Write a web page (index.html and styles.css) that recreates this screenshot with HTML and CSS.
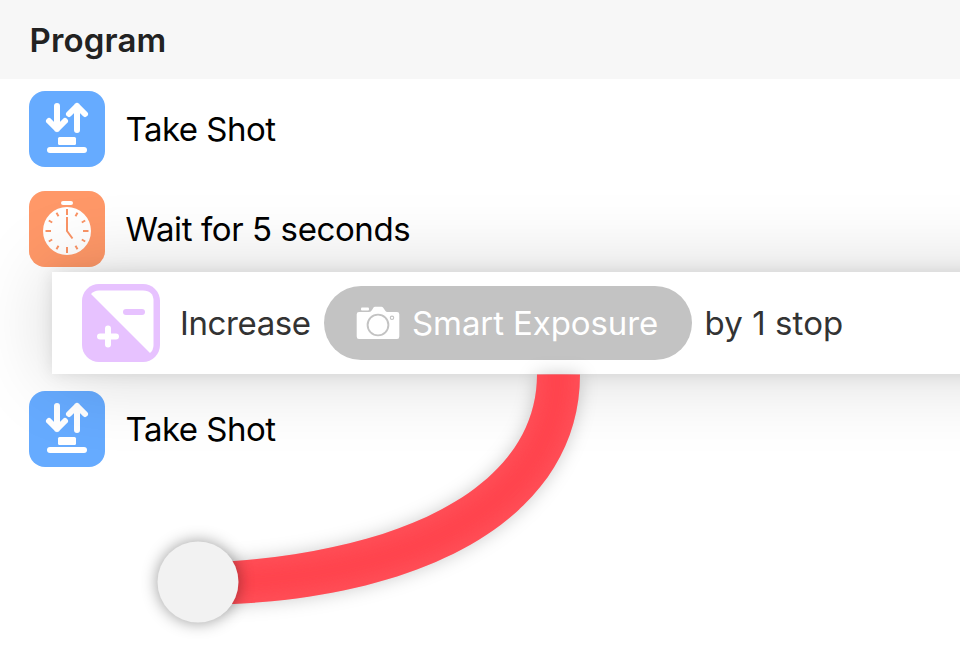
FILE: index.html
```html
<!DOCTYPE html>
<html lang="en">
<head>
<meta charset="utf-8">
<title>Program</title>
<link rel="stylesheet" href="styles.css">
</head>
<body>
<svg class="defs" width="0" height="0" aria-hidden="true">
  <symbol id="shot" viewBox="0 0 76 76">
    <g fill="none" stroke="#fff" stroke-width="6" stroke-linecap="round" stroke-linejoin="round">
      <path d="M28 15v23M20 30l8 8 8-8M48 39V15M40 23l8-8 8 8"/>
      <path d="M21 59h34"/>
    </g>
    <rect x="29" y="46" width="18" height="8" rx="1.5" fill="#fff"/>
  </symbol>
</svg>
<main class="screen">
  <header class="header"><h1>Program</h1></header>
  <section class="list">
    <div class="row">
      <svg class="icon blue"><use href="#shot"/></svg>
      <span class="label take">Take Shot</span>
    </div>
    <div class="row">
      <svg class="icon orange" viewBox="0 0 76 76">
        <rect x="32" y="10" width="12" height="4" rx="2" fill="#fff"/>
        <circle cx="38" cy="40" r="24" fill="#fff"/>
        <g fill="none" stroke="#fa9466" stroke-width="2">
          <path d="M38 18v6M38 56v6M16.500 40h5.500M54 40h5.500"/>
          <path d="M27.500 21.800l2 3.400M46.500 54.800l2 3.400M19.800 29.500l3.400 2M52.800 48.500l3.400 2M19.800 50.500l3.400-2M52.800 31.500l3.400-2M27.500 58.200l2-3.400M46.500 25.200l2-3.400"/>
          <path d="M38 26v14l5.500 7.500"/>
        </g>
      </svg>
      <span class="label wait">Wait for 5 seconds</span>
    </div>
    <div class="row gap"></div>
    <div class="row">
      <svg class="icon blue"><use href="#shot"/></svg>
      <span class="label take">Take Shot</span>
    </div>
  </section>
  <div class="dragged">
    <svg class="exposure" viewBox="0 0 78 78">
      <rect width="78" height="78" rx="17" fill="#e7c2ff"/>
      <path d="M9 10Q12 6.500 17 6.500H61Q71.500 6.500 71.500 17V61Q71.500 66 68 69Z" fill="#fff"/>
      <path d="M44 28h16" stroke="#e7c2ff" stroke-width="6" stroke-linecap="round"/>
      <path d="M18 52.500h16M26 44.500v16" stroke="#fff" stroke-width="6" stroke-linecap="round"/>
    </svg>
    <span class="label increase">Increase</span>
    <span class="pill">
      <svg class="camera" viewBox="0 0 44 34">
        <rect x="5" y="1.500" width="8" height="3" rx="1" fill="#fff"/>
        <path d="M3 6H13Q15 6 16 4L17.500 1.500Q18 .8 19 .8H25.500Q26.500 .8 27 1.500L29.500 5Q30 6 31.500 6H41Q43.300 6 43.300 8.300V30.500Q43.300 33 41 33H3Q.7 33 .7 30.500V8.300Q.7 6 3 6Z" fill="#fff"/>
        <g fill="none" stroke="#c3c3c3"><circle cx="22" cy="19" r="10.400" stroke-width="1.900"/><circle cx="36" cy="11.800" r="1.700" stroke-width="1.100"/></g>
      </svg>
      <span class="label smart">Smart Exposure</span>
    </span>
    <span class="label stop">by 1 stop</span>
  </div>
  <svg class="gesture" viewBox="0 0 960 665">
    <defs>
      <filter id="soft" x="-20%" y="-20%" width="140%" height="140%"><feGaussianBlur stdDeviation="8"/></filter>
      <clipPath id="trail"><path d="M537 374.500H580C580 510 440 594 234 604V561C420 547 537 479 537 374.500Z"/></clipPath>
    </defs>
    <path class="trail" d="M537 374.500H580C580 510 440 594 234 604H215V562.500L234 561C420 547 537 479 537 374.500Z"/>
    <g clip-path="url(#trail)">
      <path d="M558 350V374C558 495 428 572 234 582" fill="none" stroke="#ff4148" stroke-width="28" opacity=".7" filter="url(#soft)"/>
    </g>
    <circle class="touch" cx="198" cy="582" r="40.500"/>
  </svg>
</main>
</body>
</html>
```

FILE: styles.css
```css
* {
  box-sizing: border-box;
}

body {
  margin: 0;
  background: #fff;
  font-family: Inter, "Liberation Sans", sans-serif;
}

.defs {
  position: absolute;
}

.screen {
  position: relative;
  width: 960px;
  height: 665px;
  overflow: hidden;
}

.header {
  height: 79px;
  padding: 0 29.5px;
  display: flex;
  align-items: center;
  background: #f7f7f7;
}

h1 {
  margin: 0;
  font-size: 33px;
  line-height: 40px;
  font-weight: 600;
  letter-spacing: .15px;
  color: #222;
}

.row {
  height: 100px;
  padding: 0 29px;
  display: flex;
  align-items: center;
  gap: 20.5px;
}

.icon {
  width: 76px;
  height: 76px;
  flex: none;
  border-radius: 16px;
}

.blue {
  background: #66abff;
}

.orange {
  background: #ff9868;
}

.label {
  font-size: 33px;
  line-height: 40px;
  white-space: nowrap;
  color: #000;
}

.take {
  letter-spacing: -.5px;
}

.wait {
  letter-spacing: -.4px;
}

.dragged {
  position: absolute;
  top: 272px;
  left: 52px;
  width: 1100px;
  height: 102px;
  padding-left: 30px;
  display: flex;
  align-items: center;
  background: #fff;
  box-shadow: 0 0 80px rgba(0, 0, 0, .17), 0 0 16px rgba(0, 0, 0, .1);
}

.exposure {
  width: 78px;
  height: 78px;
  flex: none;
}

.increase,
.stop {
  color: #333;
}

.increase {
  width: 164px;
  padding-left: 20px;
  flex: none;
  letter-spacing: -.4px;
}

.pill {
  width: 367.5px;
  height: 74px;
  flex: none;
  padding-left: 32px;
  display: flex;
  align-items: center;
  gap: 12px;
  border-radius: 37px;
  background: #c3c3c3;
}

.camera {
  width: 44px;
  height: 34px;
  flex: none;
}

.smart {
  color: #fff;
  letter-spacing: -.1px;
}

.stop {
  padding-left: 13px;
  letter-spacing: .1px;
}

.gesture {
  position: absolute;
  inset: 0;
  width: 960px;
  height: 665px;
}

.trail {
  fill: #ff4f58;
  filter: drop-shadow(0 0 9px rgba(0, 0, 0, .2));
}

.touch {
  fill: #f2f2f2;
  filter: drop-shadow(0 0 8px rgba(0, 0, 0, .4));
}
```
